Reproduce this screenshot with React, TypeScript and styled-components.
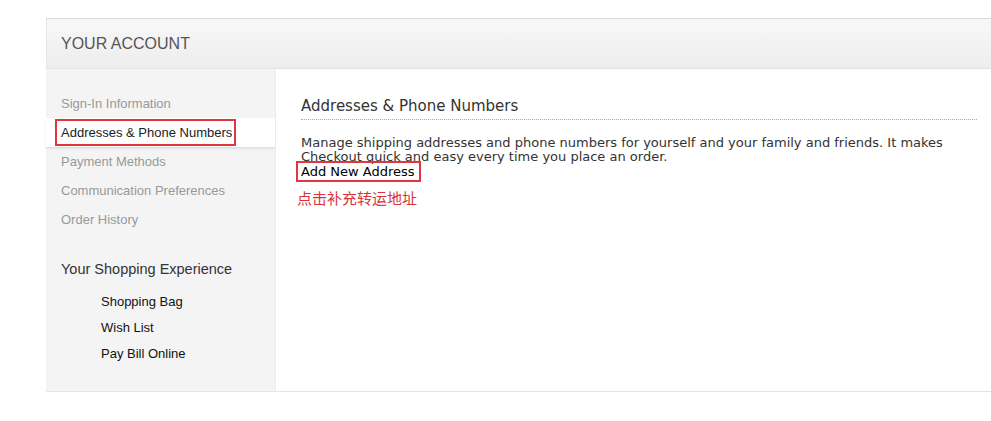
import styled, { createGlobalStyle } from 'styled-components';

const GlobalStyle = createGlobalStyle`
  body {
    margin: 0;
    background: #fff;
    font-family: Arial, "Liberation Sans", sans-serif;
  }
`;

const ACCOUNT_LINKS = [
  'Sign-In Information',
  'Addresses & Phone Numbers',
  'Payment Methods',
  'Communication Preferences',
  'Order History',
];

const SHOPPING_LINKS = ['Shopping Bag', 'Wish List', 'Pay Bill Online'];

const Page = styled.div`
  padding: 18px 0 0 46px;
  overflow: hidden;
`;

const Header = styled.header`
  height: 49px;
  border-top: 1px solid #d9d9d9;
  border-left: 1px solid #e6e6e6;
  border-bottom: 1px solid #e2e2e2;
  background: linear-gradient(#f8f8f8, #ededed);
  display: flex;
  align-items: center;
  padding-left: 14px;
`;

const HeaderTitle = styled.h1`
  margin: 0;
  font-size: 16px;
  font-weight: normal;
  color: #555;
  font-family: Arial, "Liberation Sans", sans-serif;
`;

const Body = styled.div`
  display: flex;
  height: 322px;
  border-bottom: 1px solid #e4e4e4;
`;

const Sidebar = styled.nav`
  width: 229px;
  flex-shrink: 0;
  background: #f4f4f4;
  padding-top: 20px;
`;

const NavItem = styled.div<{ $active?: boolean }>`
  height: 29px;
  display: flex;
  align-items: center;
  padding-left: 15px;
  font-size: 13px;
  color: ${p => (p.$active ? '#222' : '#999')};
  background: ${p => (p.$active ? '#fff' : 'transparent')};
  box-shadow: ${p => (p.$active ? '0 2px 2px rgba(0,0,0,0.08)' : 'none')};
`;

const Marked = styled.span`
  display: inline-block;
  margin-left: -6px;
  padding: 3px 2px 3px 4px;
  line-height: 17px;
  border: 2px solid #e2363e;
`;

const SectionTitle = styled.h2`
  margin: 23px 0 0;
  padding-left: 15px;
  font-size: 14.5px;
  font-weight: normal;
  color: #333;
  line-height: 24px;
`;

const SubList = styled.div`
  margin-top: 8px;
  padding-left: 55px;
`;

const SubItem = styled.div`
  height: 26px;
  line-height: 26px;
  font-size: 13px;
  color: #111;
`;

const Main = styled.main`
  flex: 1;
  min-width: 0;
  background: #fff;
  border-left: 1px solid #ececec;
  padding: 27px 14px 0 25px;
  font-family: Verdana, "DejaVu Sans", sans-serif;
`;

const MainTitle = styled.h2`
  margin: 0;
  font-size: 15px;
  font-weight: normal;
  color: #333;
  line-height: 20px;
  padding-bottom: 3px;
  border-bottom: 1px dotted #aaa;
`;

const Intro = styled.p`
  margin: 16px 0 0;
  font-size: 13px;
  line-height: 14px;
  color: #333;
  white-space: nowrap;
`;

const AddLink = styled.div`
  width: fit-content;
  margin: -3px 0 0 -5px;
  padding: 0 4px 0 3px;
  border: 2px solid #e2363e;
  font-size: 13px;
  line-height: 17px;
  color: #000;
  position: relative;
`;

const Note = styled.div`
  margin: 6px 0 0 -4px;
  font-size: 15px;
  line-height: 20px;
  color: #d8333b;
  font-family: "Noto Sans CJK SC", sans-serif;
`;

export default function App() {
  return (
    <Page>
      <GlobalStyle />
      <Header>
        <HeaderTitle>YOUR ACCOUNT</HeaderTitle>
      </Header>
      <Body>
        <Sidebar>
          {ACCOUNT_LINKS.map((label, i) => (
            <NavItem key={label} $active={i === 1}>
              {i === 1 ? <Marked>{label}</Marked> : label}
            </NavItem>
          ))}
          <SectionTitle>Your Shopping Experience</SectionTitle>
          <SubList>
            {SHOPPING_LINKS.map(label => (
              <SubItem key={label}>{label}</SubItem>
            ))}
          </SubList>
        </Sidebar>
        <Main>
          <MainTitle>Addresses &amp; Phone Numbers</MainTitle>
          <Intro>
            Manage shipping addresses and phone numbers for yourself and your family and friends. It makes
            <br />
            Checkout quick and easy every time you place an order.
          </Intro>
          <AddLink>Add New Address</AddLink>
          <Note>点击补充转运地址</Note>
        </Main>
      </Body>
    </Page>
  );
}
